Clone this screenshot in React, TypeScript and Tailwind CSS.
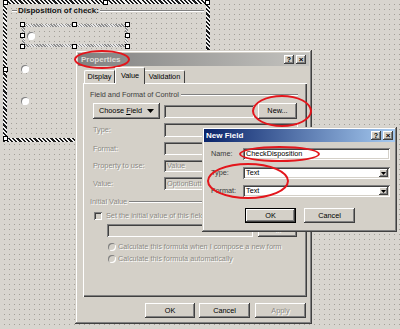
import React from 'react';

const face = 'bg-[#d4d0c8]';
const raised = 'shadow-[inset_-1px_-1px_#404040,inset_1px_1px_#ffffff,inset_-2px_-2px_#808080]';
const defRaised =
  'shadow-[inset_0_0_0_1px_#000000,inset_-2px_-2px_#404040,inset_2px_2px_#ffffff,inset_-3px_-3px_#808080]';
const sunken = 'shadow-[inset_1px_1px_#808080,inset_-1px_-1px_#ffffff,inset_2px_2px_#404040,inset_-2px_-2px_#d4d0c8]';
const dim = 'text-[#8c8a84] [text-shadow:1px_1px_0_#ffffff]';
const canvas =
  'bg-[image:linear-gradient(90deg,#d8d5cf_4px,transparent_4px),linear-gradient(#d8d5cf_4px,#a29f98_4px)] bg-[length:5px_5px]';

const Btn = ({ children, className = '', off = false, def = false }: { children: React.ReactNode; className?: string; off?: boolean; def?: boolean }) => (
  <div className={`flex items-center justify-center leading-none ${face} ${def ? defRaised : raised} ${off ? dim : 'text-black'} ${className}`}>
    {children}
  </div>
);

const Field = ({ children, className = '', white = false }: { children?: React.ReactNode; className?: string; white?: boolean }) => (
  <div className={`flex items-center pl-[3px] leading-none ${white ? 'bg-white text-black' : `${face} ${dim}`} ${sunken} ${className}`}>{children}</div>
);

const Handle = ({ className }: { className: string }) => (
  <div className={`absolute w-[5px] h-[5px] bg-white border border-black ${className}`} />
);

const Radio = ({ off = false, className = '' }: { off?: boolean; className?: string }) => (
  <div className={`w-[8px] h-[8px] rounded-full ${off ? face : 'bg-white'} shadow-[inset_1px_1px_#808080,inset_-1px_-1px_#ffffff] ${className}`} />
);

const TitleButtons = () => (
  <div className="flex gap-[2px]">
    <Btn className="w-[10px] h-[9px] text-[7px] font-bold">?</Btn>
    <Btn className="w-[10px] h-[9px] text-[8px] font-bold">×</Btn>
  </div>
);

const Etched = () => <div className="flex-1 h-[2px] border-t border-[#808080] border-b border-b-white" />;

const Section = () => (
  <div className="relative ml-[3px] w-[207px] h-[142px] p-[4px] bg-[image:repeating-linear-gradient(45deg,#1c1c1c_0_1.5px,#f4f4f4_1.5px_3px)]">
    <div className={`w-full h-full ${canvas} pl-[5px] pt-[3px]`}>
      <div className="flex items-center w-[192px] h-[8px]">
        <div className="w-[5px] h-[2px] border-t border-[#808080] border-b border-b-white" />
        <span className="px-[1px] text-[8px] font-bold text-[#111] leading-none">Disposition of check:</span>
        <Etched />
      </div>
      <div className="relative ml-[10px] mt-[9px] w-[106px] h-[23px] p-[3px] bg-[image:repeating-linear-gradient(45deg,#8f8f8f_0_1px,#e8e8e8_1px_2px)]">
        <div className={`w-full h-full ${canvas} flex items-center pl-[2px]`}>
          <Radio />
        </div>
        <Handle className="-left-[2px] -top-[2px]" />
        <Handle className="left-[50px] -top-[2px]" />
        <Handle className="-right-[2px] -top-[2px]" />
        <Handle className="-left-[2px] top-[9px]" />
        <Handle className="-right-[2px] top-[9px]" />
        <Handle className="-left-[2px] -bottom-[2px]" />
        <Handle className="left-[50px] -bottom-[2px]" />
        <Handle className="-right-[2px] -bottom-[2px]" />
      </div>
      <Radio className="ml-[9px] mt-[18px]" />
      <Radio className="ml-[9px] mt-[24px]" />
    </div>
    <Handle className="left-0 top-0" />
    <Handle className="left-[100px] top-0" />
    <Handle className="right-0 top-0" />
    <Handle className="left-0 top-[67px]" />
    <Handle className="left-0 bottom-[1px]" />
  </div>
);

const Properties = () => (
  <div className={`absolute left-[75px] top-[50px] w-[237px] h-[274px] p-[3px] flex flex-col ${face} shadow-[inset_-1px_-1px_#404040,inset_1px_1px_#d4d0c8,inset_-2px_-2px_#808080,inset_2px_2px_#ffffff]`}>
    <div className="h-[13px] flex items-center justify-between pl-[3px] pr-[3px] bg-[linear-gradient(90deg,#808080,#c4c3bf)]">
      <span className="text-[8px] font-bold text-[#dcdad5] leading-none">Properties</span>
      <TitleButtons />
    </div>
    <div className="relative z-10 mt-[1px] h-[16px] flex items-end pl-[6px] text-[7.3px] leading-none text-black">
      <div className="w-[31px] h-[13px] flex items-center justify-center border-t border-l border-white border-r border-r-[#404040] rounded-tl-[2px]">Display</div>
      <div className={`w-[30px] h-[17px] -mb-px flex items-center justify-center ${face} border-t border-l border-white border-r border-r-[#404040] rounded-t-[2px]`}>Value</div>
      <div className="w-[40px] h-[13px] flex items-center justify-center border-t border-white border-r border-r-[#404040] rounded-tr-[2px]">Validation</div>
    </div>
    <div className="ml-[5px] w-[224px] h-[214px] border-t border-l border-white shadow-[inset_-1px_-1px_#404040,inset_-2px_-2px_#808080] pl-[9px] pr-[9px] pt-[6px] text-[7.3px] leading-none">
      <div className="flex items-center h-[10px] -ml-[3px]">
        <span className="pr-[2px] text-[#3c3c3c]">Field and Format of Control</span>
        <Etched />
      </div>
      <div className="mt-[3px] flex items-center gap-[4px]">
        <Btn className="w-[67px] h-[16px] gap-[5px]">
          <span>Choose <span className="underline">F</span>ield</span>
          <svg width="7" height="4" viewBox="0 0 7 4"><path d="M0 0h7L3.5 4z" fill="#000" /></svg>
        </Btn>
        <Field className="w-[90px] h-[13px]" />
        <Btn className="w-[39px] h-[16px]">New...</Btn>
      </div>
      <div className="mt-[4px] flex items-center h-[14px]">
        <span className={`w-[71px] ${dim}`}>Type:</span>
        <Field className="flex-1 h-[14px]" />
      </div>
      <div className="mt-[5px] flex items-center h-[13px]">
        <span className={`w-[71px] ${dim}`}>Format:</span>
        <Field className="flex-1 h-[13px]" />
      </div>
      <div className="mt-[5px] flex items-center h-[12px]">
        <span className={`w-[71px] ${dim}`}>Property to use:</span>
        <Field className="flex-1 h-[12px]">Value</Field>
      </div>
      <div className="mt-[5px] flex items-center h-[13px]">
        <span className={`w-[71px] ${dim}`}>Value:</span>
        <Field className="flex-1 h-[13px]">OptionButton1</Field>
      </div>
      <div className="mt-[6px] flex items-center h-[11px] -ml-[3px]">
        <span className={`pr-[2px] ${dim}`}>Initial Value</span>
        <Etched />
      </div>
      <div className="mt-[4px] flex items-center gap-[4px] h-[9px] ml-[1px]">
        <div className={`w-[8px] h-[8px] ${face} ${sunken}`} />
        <span className={dim}>Set the initial value of this field</span>
      </div>
      <div className="mt-[3px] flex items-center gap-[5px] ml-[14px]">
        <Field className="w-[146px] h-[13px]" />
        <Btn off className="w-[39px] h-[14px]">fx</Btn>
      </div>
      <div className="mt-[5px] ml-[15px] flex items-center gap-[2px] h-[10px]">
        <Radio off />
        <span className={dim}>Calculate this formula when I compose a new form</span>
      </div>
      <div className="mt-[2px] ml-[15px] flex items-center gap-[2px] h-[10px]">
        <Radio off />
        <span className={dim}>Calculate this formula automatically</span>
      </div>
    </div>
    <div className="mt-[6px] flex justify-end gap-[4px] pr-[3px] text-[7.3px]">
      <Btn className="w-[50px] h-[15px]">OK</Btn>
      <Btn className="w-[51px] h-[15px]">Cancel</Btn>
      <Btn off className="w-[51px] h-[15px] ml-[1px]">Apply</Btn>
    </div>
  </div>
);

const Select = ({ value }: { value: string }) => (
  <div className={`flex items-center justify-between w-[147px] h-[12px] bg-white ${sunken} pl-[3px] pr-[2px]`}>
    <span className="text-black">{value}</span>
    <Btn className="w-[9px] h-[8px]">
      <svg width="5" height="3" viewBox="0 0 5 3"><path d="M0 0h5L2.5 3z" fill="#000" /></svg>
    </Btn>
  </div>
);

const NewField = () => (
  <div className={`absolute left-[202px] top-[127px] w-[195px] h-[105px] p-[2px] flex flex-col ${face} shadow-[inset_-1px_-1px_#404040,inset_1px_1px_#d4d0c8,inset_-2px_-2px_#808080,inset_2px_2px_#ffffff] text-[7.3px] leading-none`}>
    <div className="h-[13px] flex items-center justify-between pl-[2px] pr-[2px] bg-[linear-gradient(90deg,#0a246a,#a6caf0)]">
      <span className="text-[8px] font-bold text-white">New Field</span>
      <TitleButtons />
    </div>
    <div className="mt-[6px] flex items-center pl-[7px]">
      <span className="w-[32px] text-[#3a3a3a]">Name:</span>
      <Field white className="w-[147px] h-[12px]">CheckDisposition</Field>
    </div>
    <div className="mt-[7px] flex items-center pl-[7px]">
      <span className="w-[32px] text-[#3a3a3a]">Type:</span>
      <Select value="Text" />
    </div>
    <div className="mt-[6px] flex items-center pl-[7px]">
      <span className="w-[32px] text-[#3a3a3a]">Format:</span>
      <Select value="Text" />
    </div>
    <div className="mt-[11px] flex gap-[8px] pl-[41px]">
      <Btn def className="w-[51px] h-[15px]">OK</Btn>
      <Btn className="w-[51px] h-[15px]">Cancel</Btn>
    </div>
  </div>
);

const Ring = ({ className }: { className: string }) => (
  <div className={`absolute rounded-[50%] border-2 border-[#e3161c] ${className}`} />
);

export default function App() {
  return (
    <div className={`relative w-[400px] h-[329px] overflow-hidden bg-[#d8d5cf] ${canvas} font-['Liberation_Sans',Arial,sans-serif]`}>
      <Section />
      <Properties />
      <NewField />
      <Ring className="left-[74px] top-[50px] w-[56px] h-[19px]" />
      <Ring className="left-[252px] top-[95px] w-[60px] h-[32px]" />
      <Ring className="left-[239px] top-[146px] w-[81px] h-[16px]" />
      <Ring className="left-[207px] top-[163px] w-[82px] h-[36px]" />
    </div>
  );
}
